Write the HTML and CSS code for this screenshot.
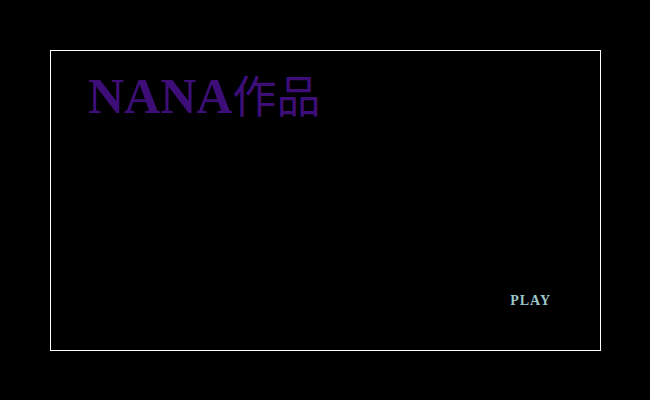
FILE: index.html
```html
<!DOCTYPE html>
<html lang="zh">
<head>
<meta charset="utf-8">
<title>NANA作品</title>
<link rel="stylesheet" href="styles.css">
</head>
<body>
<div class="stage">
  <h1 class="title">NANA<span class="cjk">作品</span></h1>
  <div class="play">PLAY</div>
</div>
</body>
</html>
```

FILE: styles.css
```css
html, body {
  margin: 0;
  padding: 0;
  background: #000;
}
body {
  width: 650px;
  height: 400px;
  overflow: hidden;
}
.stage {
  box-sizing: border-box;
  margin: 50px 0 0 50px;
  width: 551px;
  height: 301px;
  border: 1px solid #fff;
  display: flex;
  flex-direction: column;
  justify-content: space-between;
  padding: 18px 50px 42px 37px;
}
.title {
  margin: 0;
  font-family: "Liberation Serif", "Noto Sans CJK SC", serif;
  font-weight: bold;
  font-size: 50px;
  line-height: 50px;
  color: #3d0e78;
}
.cjk {
  font-family: "Noto Sans CJK SC", sans-serif;
  font-weight: normal;
  font-size: 44px;
}
.play {
  align-self: flex-end;
  font-family: "Liberation Serif", serif;
  font-weight: bold;
  font-size: 14px;
  line-height: 14px;
  letter-spacing: 1px;
  margin-right: -1px;
  color: #9cc8c8;
}
```
